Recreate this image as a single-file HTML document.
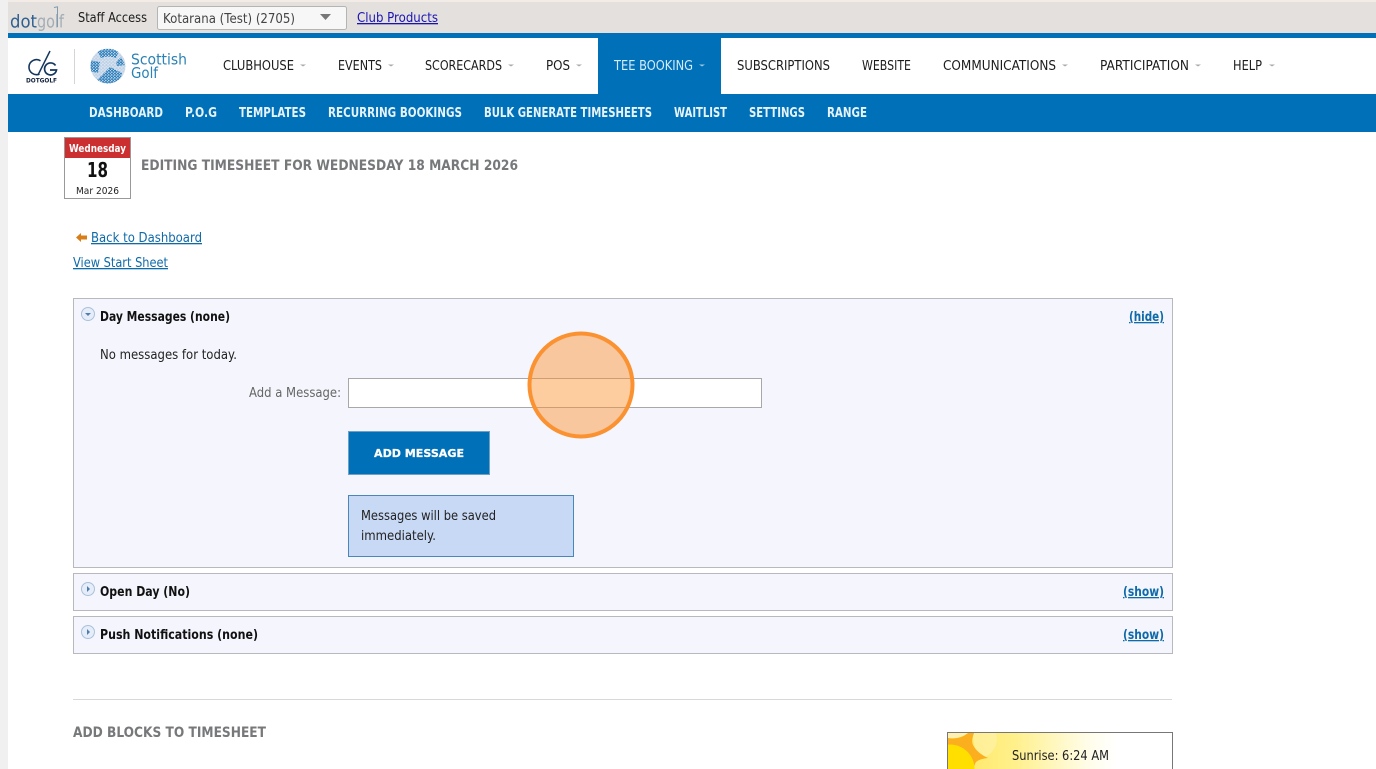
<!DOCTYPE html>
<html lang="en"><head><meta charset="utf-8"><title>Timesheet</title>
<style>
html,body{margin:0;padding:0;background:#fff;width:1376px;height:769px;overflow:hidden}
svg{display:block}
text{font-family:"DejaVu Sans","Liberation Sans",sans-serif;font-size:13px;fill:#222}
.n{font-size:13px;fill:#1c1c1c}
.s{font-size:13px;font-weight:bold;fill:#e6f3fb}
.h{font-weight:bold;fill:#111;font-size:13.500px}
.g{font-weight:bold;fill:#77787a;font-size:14.500px}
.l{fill:#0f6aa8;text-decoration:underline}
.lb{fill:#0f6aa8;text-decoration:underline;font-weight:bold}
</style></head><body>
<svg width="1376" height="769" viewBox="0 0 1376 769" xmlns="http://www.w3.org/2000/svg">
<defs>
<linearGradient id="sun" x1="0" x2="1" y1="0" y2="0"><stop offset="0" stop-color="#ffe65a"/><stop offset=".3" stop-color="#fff08c"/><stop offset=".62" stop-color="#fffde8"/><stop offset=".75" stop-color="#fff"/></linearGradient>
<pattern id="dots" width="3" height="2.800" patternUnits="userSpaceOnUse"><circle cx="1" cy=".7" r="1.050" fill="#2a7ebb"/><circle cx="2.500" cy="2.100" r="1.050" fill="#2a7ebb"/></pattern>
<pattern id="dotsL" width="3.400" height="3.200" patternUnits="userSpaceOnUse"><circle cx="1" cy="1" r="1.100" fill="#bcd0e6"/><circle cx="2.700" cy="2.600" r="1.100" fill="#bcd0e6"/></pattern>
<clipPath id="sunclip"><rect x="948" y="733" width="224" height="36"/></clipPath>
<clipPath id="bc"><circle cx="108" cy="66" r="17.500"/></clipPath>
</defs>

<rect x="0" y="0" width="8" height="769" fill="#f0f0f0"/>
<rect x="8" y="0" width="1368" height="2" fill="#f3ebe5"/>
<rect x="8" y="2" width="1368" height="31" fill="#e3e0dd"/>
<rect x="8" y="33" width="1368" height="5" fill="#0070b8"/>
<rect x="8" y="94" width="1368" height="38" fill="#0070b8"/>
<rect x="598" y="38" width="123" height="56" fill="#0070b8"/>

<!-- dotgolf top logo -->
<text x="10" y="27.500" style="font-size:18px;fill:#2f5f90" textLength="27" lengthAdjust="spacingAndGlyphs">dot</text>
<text x="37" y="27.500" style="font-size:18px;fill:#a3adb4" textLength="27" lengthAdjust="spacingAndGlyphs">golf</text>
<path d="M54 7.500l4-.8M57.500 7v20" stroke="#7f9bb0" stroke-width="1" fill="none"/>

<text x="78" y="22" class="n" textLength="69" lengthAdjust="spacingAndGlyphs">Staff Access</text>
<rect x="157.500" y="6.500" width="189" height="23" rx="2" fill="#f7f7f7" stroke="#b4b4b4"/>
<text x="163" y="23" style="font-size:13px;fill:#444" textLength="132" lengthAdjust="spacingAndGlyphs">Kotarana (Test) (2705)</text>
<path d="M320 14h11l-5.500 6z" fill="#777"/>
<text x="357" y="22" style="font-size:13px;fill:#1a14b4;text-decoration:underline" textLength="81" lengthAdjust="spacingAndGlyphs">Club Products</text>

<!-- DOTGOLF logo -->
<path d="M40.500 60.800a7.500 7.500 0 1 0 -1 13.200" stroke="#14365e" stroke-width="1.600" fill="none"/>
<path d="M38 75L50 51" stroke="#14365e" stroke-width="1.500" fill="none"/>
<path d="M55.500 65.500a6 6 0 1 0 1 4.500h-6.500" stroke="#14365e" stroke-width="1.700" fill="none"/>
<text x="26" y="82.500" style="font-size:6px;font-weight:bold;fill:#14233c" textLength="31" lengthAdjust="spacingAndGlyphs">DOTGOLF</text>
<rect x="74" y="49" width="1" height="35" fill="#d5d5d5"/>

<!-- Scottish Golf logo -->
<circle cx="108" cy="66" r="17.500" fill="#dde6f1"/>
<g clip-path="url(#bc)">
<rect x="90" y="48" width="36" height="36" fill="url(#dotsL)"/>
<path d="M96 49h24l-4 9q-8-3-15 0z" fill="url(#dots)"/>
<path d="M96 81l14-14 12 6-3 13h-20z" fill="url(#dots)"/>
<path d="M89 60l11 2-2 11-9-2z" fill="url(#dots)"/>
<path d="M116 62l5-5 4 8-8 1z" fill="url(#dots)"/>
</g>
<text x="131" y="64.500" style="font-size:15px;fill:#2b82b5" textLength="56" lengthAdjust="spacingAndGlyphs">Scottish</text>
<text x="131" y="78" style="font-size:15px;fill:#2b82b5" textLength="27" lengthAdjust="spacingAndGlyphs">Golf</text>

<!-- Main nav -->
<text x="223" y="70" class="n" textLength="71" lengthAdjust="spacingAndGlyphs">CLUBHOUSE</text>
<path d="M300 64.500h6l-3 2z" fill="#aaa"/>
<text x="338" y="70" class="n" textLength="44" lengthAdjust="spacingAndGlyphs">EVENTS</text>
<path d="M388 64.500h6l-3 2z" fill="#aaa"/>
<text x="425" y="70" class="n" textLength="77" lengthAdjust="spacingAndGlyphs">SCORECARDS</text>
<path d="M508 64.500h6l-3 2z" fill="#aaa"/>
<text x="546" y="70" class="n" textLength="24" lengthAdjust="spacingAndGlyphs">POS</text>
<path d="M576 64.500h6l-3 2z" fill="#aaa"/>
<text x="614" y="70" class="n" style="fill:#d4ecfa" textLength="79" lengthAdjust="spacingAndGlyphs">TEE BOOKING</text>
<path d="M699 64.500h6l-3 2z" fill="#9cc6e2"/>
<text x="737" y="70" class="n" textLength="93" lengthAdjust="spacingAndGlyphs">SUBSCRIPTIONS</text>
<text x="862" y="70" class="n" textLength="49" lengthAdjust="spacingAndGlyphs">WEBSITE</text>
<text x="943" y="70" class="n" textLength="113" lengthAdjust="spacingAndGlyphs">COMMUNICATIONS</text>
<path d="M1062 64.500h6l-3 2z" fill="#aaa"/>
<text x="1100" y="70" class="n" textLength="89" lengthAdjust="spacingAndGlyphs">PARTICIPATION</text>
<path d="M1195 64.500h6l-3 2z" fill="#aaa"/>
<text x="1233" y="70" class="n" textLength="29" lengthAdjust="spacingAndGlyphs">HELP</text>
<path d="M1269 64.500h6l-3 2z" fill="#aaa"/>

<!-- Sub nav -->
<text x="89" y="117" class="s" textLength="74" lengthAdjust="spacingAndGlyphs">DASHBOARD</text>
<text x="185" y="117" class="s" textLength="32" lengthAdjust="spacingAndGlyphs">P.O.G</text>
<text x="239" y="117" class="s" textLength="67" lengthAdjust="spacingAndGlyphs">TEMPLATES</text>
<text x="328" y="117" class="s" textLength="134" lengthAdjust="spacingAndGlyphs">RECURRING BOOKINGS</text>
<text x="484" y="117" class="s" textLength="168" lengthAdjust="spacingAndGlyphs">BULK GENERATE TIMESHEETS</text>
<text x="674" y="117" class="s" textLength="53" lengthAdjust="spacingAndGlyphs">WAITLIST</text>
<text x="749" y="117" class="s" textLength="56" lengthAdjust="spacingAndGlyphs">SETTINGS</text>
<text x="827" y="117" class="s" textLength="40" lengthAdjust="spacingAndGlyphs">RANGE</text>

<!-- Calendar -->
<rect x="64.500" y="137.500" width="66" height="61" fill="#fff" stroke="#999"/>
<rect x="65" y="138" width="65" height="20" fill="#cc2f30"/>
<text x="69" y="152" style="font-size:10.500px;font-weight:bold;fill:#fff" textLength="57" lengthAdjust="spacingAndGlyphs">Wednesday</text>
<text x="87" y="177" style="font-size:20px;font-weight:bold;fill:#111" textLength="21" lengthAdjust="spacingAndGlyphs">18</text>
<text x="76" y="194" style="font-size:10px;fill:#222" textLength="43" lengthAdjust="spacingAndGlyphs">Mar 2026</text>

<text x="141" y="170" class="g" textLength="377" lengthAdjust="spacingAndGlyphs">EDITING TIMESHEET FOR WEDNESDAY 18 MARCH 2026</text>

<path d="M76 237.500l5-4.500v2.500h6v4h-6v2.500z" fill="#d97d18"/>
<text x="91" y="242" class="l" textLength="111" lengthAdjust="spacingAndGlyphs">Back to Dashboard</text>
<text x="73" y="267" class="l" textLength="95" lengthAdjust="spacingAndGlyphs">View Start Sheet</text>

<!-- Day messages -->
<rect x="73.500" y="298.500" width="1099" height="269" fill="#f5f6fd" stroke="#b7b9bf"/>
<circle cx="88" cy="314" r="6.500" fill="#e6edf8" stroke="#a9c1da"/>
<path d="M85 313h6l-3 3z" fill="#4b7fae"/>
<text x="100" y="321" class="h" textLength="130" lengthAdjust="spacingAndGlyphs">Day Messages (none)</text>
<text x="1129" y="321" class="lb" textLength="35" lengthAdjust="spacingAndGlyphs">(hide)</text>
<text x="100" y="359" textLength="137" lengthAdjust="spacingAndGlyphs">No messages for today.</text>
<text x="249" y="397" style="fill:#666" textLength="92" lengthAdjust="spacingAndGlyphs">Add a Message:</text>
<rect x="348.500" y="378.500" width="413" height="29" fill="#fff" stroke="#a8a8a8"/>
<rect x="348.500" y="431.500" width="141" height="43" fill="#0070b8" stroke="#6f9fc4"/>
<text x="374" y="457" style="font-size:10.500px;font-weight:bold;fill:#fff;stroke:#fff;stroke-width:.25" textLength="90" lengthAdjust="spacingAndGlyphs">ADD MESSAGE</text>
<rect x="348.500" y="495.500" width="225" height="61" fill="#c8d9f6" stroke="#4b86b8"/>
<text x="361" y="520" textLength="135" lengthAdjust="spacingAndGlyphs">Messages will be saved</text>
<text x="361" y="540" textLength="75" lengthAdjust="spacingAndGlyphs">immediately.</text>

<!-- Open Day -->
<rect x="73.500" y="573.500" width="1099" height="37" fill="#f5f6fd" stroke="#b7b9bf"/>
<circle cx="88" cy="589" r="6.500" fill="#e6edf8" stroke="#a9c1da"/>
<path d="M87 586v6l3-3z" fill="#4b7fae"/>
<text x="100" y="596" class="h" textLength="90" lengthAdjust="spacingAndGlyphs">Open Day (No)</text>
<text x="1123" y="596" class="lb" textLength="41" lengthAdjust="spacingAndGlyphs">(show)</text>

<!-- Push Notifications -->
<rect x="73.500" y="616.500" width="1099" height="37" fill="#f5f6fd" stroke="#b7b9bf"/>
<circle cx="88" cy="632" r="6.500" fill="#e6edf8" stroke="#a9c1da"/>
<path d="M87 629v6l3-3z" fill="#4b7fae"/>
<text x="100" y="639" class="h" textLength="158" lengthAdjust="spacingAndGlyphs">Push Notifications (none)</text>
<text x="1123" y="639" class="lb" textLength="41" lengthAdjust="spacingAndGlyphs">(show)</text>

<rect x="73" y="699" width="1099" height="1" fill="#d8d8d8"/>
<text x="73" y="737" class="g" textLength="193" lengthAdjust="spacingAndGlyphs">ADD BLOCKS TO TIMESHEET</text>

<!-- Sunrise box -->
<rect x="947.500" y="732.500" width="225" height="40" fill="url(#sun)" stroke="#777"/>
<g clip-path="url(#sunclip)">
<path d="M972 733h24q4 14-10 24l-10-4z" fill="#fff3b0" opacity=".6"/>
<path d="M948 738q12 2 20-5l6 0q-3 8 -1 12q4 8 15 13q-9 1 -12 4q-2 3-2 7h-26z" fill="#fbae1e"/>
<circle cx="950" cy="769" r="24.500" fill="#ffdf00"/>
<path d="M948 733h20q-8 6-20 5z" fill="#fff0b0"/>
</g>
<text x="1012" y="760" textLength="97" lengthAdjust="spacingAndGlyphs">Sunrise: 6:24 AM</text>

<!-- Click highlight -->
<circle cx="581" cy="385" r="51.500" fill="#fb8f2e" fill-opacity=".46" stroke="#fb9232" stroke-width="4"/>
</svg>
</body></html>
